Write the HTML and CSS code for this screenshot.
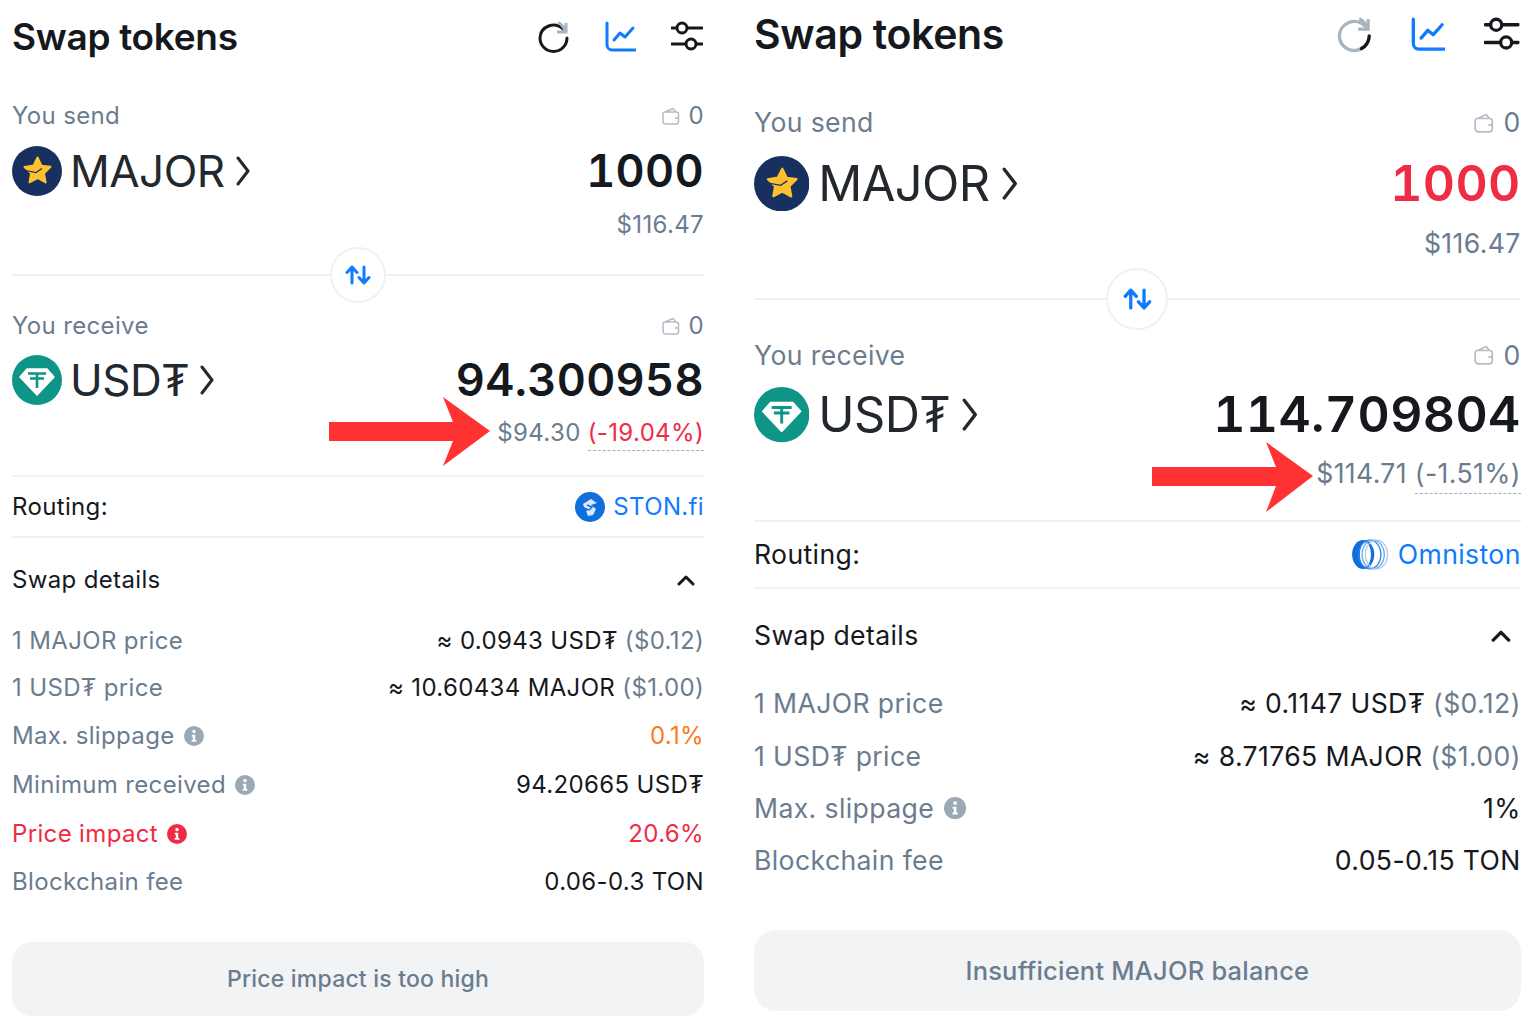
FILE: index.html
```html
<!DOCTYPE html>
<html>
<head>
    <title>Swap tokens</title>
    <meta name="viewport" content="width=device-width, initial-scale=1.0">
    <link rel="stylesheet" href="styles.css">
</head>
<body>
    <svg class="defs" width="0" height="0">
        <symbol id="i-chart" viewBox="0 0 32 32">
            <path d="M3 2v22a5 5 0 0 0 5 5h23" fill="none" stroke="currentColor" stroke-width="3" stroke-linecap="round"/>
            <path d="M10 19l6-7 5 4 8-9" fill="none" stroke="currentColor" stroke-width="3" stroke-linecap="round" stroke-linejoin="round"/>
        </symbol>
        <symbol id="i-sliders" viewBox="0 0 32 32">
            <path d="M1 7h4M17 7h14M1 23h13M26 23h5" fill="none" stroke="currentColor" stroke-width="3" stroke-linecap="round"/>
            <circle cx="11" cy="7" r="5" fill="none" stroke="currentColor" stroke-width="3"/>
            <circle cx="20" cy="23" r="5" fill="none" stroke="currentColor" stroke-width="3"/>
        </symbol>
        <symbol id="i-wallet" viewBox="0 0 18 18">
            <path d="M3 5l8-3.500 3 3.500M3 5h11a2.500 2.500 0 0 1 2.500 2.500v7a2.500 2.500 0 0 1-2.500 2.500H4a3 3 0 0 1-3-3V7a2 2 0 0 1 2-2zM13 11h3.500" fill="none" stroke="currentColor" stroke-width="1.500" stroke-linejoin="round"/>
        </symbol>
        <symbol id="i-chev" viewBox="0 0 14 30">
            <path d="M2 2l10 13L2 28" fill="none" stroke="currentColor" stroke-width="3" stroke-linecap="round" stroke-linejoin="round"/>
        </symbol>
        <symbol id="i-info" viewBox="0 0 20 20">
            <circle cx="10" cy="10" r="10" fill="currentColor"/>
            <circle cx="10" cy="5.500" r="1.700" fill="#fff"/>
            <path d="M7.800 8.800h3.400v5.200h1.200v1.800H7.600V14h1.200v-3.400h-1z" fill="#fff"/>
        </symbol>
        <symbol id="i-up" viewBox="0 0 18 12">
            <path d="M2 10l7-7 7 7" fill="none" stroke="currentColor" stroke-width="3" stroke-linecap="round" stroke-linejoin="round"/>
        </symbol>
        <symbol id="i-swap" viewBox="0 0 26 20">
            <path d="M7 18V2M2 7.500L7 2l5 5.500M19 2v16M14 12.500l5 5.500 5-5.500" fill="none" stroke="currentColor" stroke-width="3" stroke-linecap="round" stroke-linejoin="round"/>
        </symbol>
        <symbol id="t-major" viewBox="0 0 50 50">
            <circle cx="25" cy="25" r="25" fill="#17305f"/>
            <path d="M25.500 11.500l4 8.200 9 1.100-6.500 6.500 1.600 9.200-8.100-4.500-8 4.300 1.500-9-6.500-6.300 9-1.400z" fill="#fdc12f" stroke="#fdc12f" stroke-width="2" stroke-linejoin="round"/>
            <path d="M11 24l13 2.500 6-4" fill="none" stroke="#17305f" stroke-width="1.200"/>
        </symbol>
        <symbol id="t-usdt" viewBox="0 0 50 50">
            <circle cx="25" cy="25" r="25" fill="#0f9488"/>
            <path d="M15 14h20l7 8-17 18L8 22z" fill="#fff" stroke="#fff" stroke-width="1.500" stroke-linejoin="round"/>
            <path d="M16 18.500h18M18 23.500h14M25 18.500V33" fill="none" stroke="#0f9488" stroke-width="2.600"/>
        </symbol>
        <symbol id="t-ston" viewBox="0 0 30 30">
            <circle cx="15" cy="15" r="15" fill="#0f6fdc"/>
            <path d="M8 12l8-5 6 4-6 2 5 4-3 6-5 1-2-5 4-1-6-3z" fill="#dbe9fb"/>
            <path d="M12 13l5 2-3 3" fill="none" stroke="#0f6fdc" stroke-width="1.500"/>
        </symbol>
        <symbol id="t-omni" viewBox="0 0 34 28">
            <ellipse cx="11" cy="14" rx="10" ry="13" fill="#0f6fdc"/>
            <ellipse cx="13" cy="14" rx="5" ry="11" fill="#fff"/>
            <ellipse cx="17" cy="14" rx="10" ry="13" fill="none" stroke="#2d84e8" stroke-width="1.200"/>
            <ellipse cx="20" cy="14" rx="10" ry="13" fill="none" stroke="#6aa8ee" stroke-width="1.200"/>
            <ellipse cx="23" cy="14" rx="10" ry="13" fill="none" stroke="#a8cbf3" stroke-width="1.200"/>
        </symbol>
    </svg>

    <div class="page">
        <section class="panel panel-left">
            <header class="head">
                <h1>Swap tokens</h1>
                <div class="tools">
                    <svg class="tool" viewBox="0 0 32 32">
                        <path d="M26 8A13.500 13.500 0 0 0 3 17a13.500 13.500 0 0 0 27 0" fill="none" stroke="#15191e" stroke-width="3" stroke-linecap="round"/>
                        <path d="M20 11h9V2" fill="none" stroke="#aab4bf" stroke-width="3"/>
                        <path d="M21 1.500a14 14 0 0 1 7 8" fill="none" stroke="#aab4bf" stroke-width="3"/>
                    </svg>
                    <svg class="tool tool-blue"><use href="#i-chart"/></svg>
                    <svg class="tool"><use href="#i-sliders"/></svg>
                </div>
            </header>

            <div class="side side-send">
                <div class="side-top">
                    <span>You send</span>
                    <span class="balance"><svg class="wallet"><use href="#i-wallet"/></svg>0</span>
                </div>
                <div class="token-row">
                    <div class="token">
                        <svg class="token-logo"><use href="#t-major"/></svg>
                        <span class="token-name">MAJOR</span>
                        <svg class="chev"><use href="#i-chev"/></svg>
                    </div>
                    <div class="amount">1000</div>
                </div>
                <div class="usd">$116.47</div>
            </div>

            <div class="divider">
                <button class="swap-btn"><svg class="swap-icon"><use href="#i-swap"/></svg></button>
            </div>

            <div class="side side-receive">
                <div class="side-top">
                    <span>You receive</span>
                    <span class="balance"><svg class="wallet"><use href="#i-wallet"/></svg>0</span>
                </div>
                <div class="token-row">
                    <div class="token">
                        <svg class="token-logo"><use href="#t-usdt"/></svg>
                        <span class="token-name">USD₮</span>
                        <svg class="chev"><use href="#i-chev"/></svg>
                    </div>
                    <div class="amount">94.300958</div>
                </div>
                <div class="usd">$94.30 <span class="pct pct-red">(-19.04%)</span></div>
            </div>

            <div class="routing">
                <span>Routing:</span>
                <span class="route-link"><svg class="route-ston"><use href="#t-ston"/></svg>STON.fi</span>
            </div>

            <div class="details-head">
                <span>Swap details</span>
                <svg class="up"><use href="#i-up"/></svg>
            </div>

            <div class="details">
                <div class="detail">
                    <span class="detail-name">1 MAJOR price</span>
                    <span>≈ 0.0943 USD₮ <span class="muted">($0.12)</span></span>
                </div>
                <div class="detail">
                    <span class="detail-name">1 USD₮ price</span>
                    <span>≈ 10.60434 MAJOR <span class="muted">($1.00)</span></span>
                </div>
                <div class="detail detail-tall">
                    <span class="detail-name">Max. slippage <svg class="info"><use href="#i-info"/></svg></span>
                    <span class="orange">0.1%</span>
                </div>
                <div class="detail detail-tall">
                    <span class="detail-name">Minimum received <svg class="info"><use href="#i-info"/></svg></span>
                    <span>94.20665 USD₮</span>
                </div>
                <div class="detail detail-tall">
                    <span class="detail-name red">Price impact <svg class="info"><use href="#i-info"/></svg></span>
                    <span class="red">20.6%</span>
                </div>
                <div class="detail">
                    <span class="detail-name">Blockchain fee</span>
                    <span>0.06-0.3 TON</span>
                </div>
            </div>

            <button class="submit">Price impact is too high</button>
        </section>

        <section class="panel panel-right">
            <header class="head">
                <h1>Swap tokens</h1>
                <div class="tools">
                    <svg class="tool" viewBox="0 0 32 32">
                        <path d="M26 8A13.500 13.500 0 0 0 3 17a13.500 13.500 0 0 0 20 11.500" fill="none" stroke="#aab4bf" stroke-width="3" stroke-linecap="round"/>
                        <path d="M23 28.500A13.500 13.500 0 0 0 30 17" fill="none" stroke="#15191e" stroke-width="3" stroke-linecap="round"/>
                        <path d="M20 11h9V2" fill="none" stroke="#aab4bf" stroke-width="3"/>
                        <path d="M21 1.500a14 14 0 0 1 7 8" fill="none" stroke="#aab4bf" stroke-width="3"/>
                    </svg>
                    <svg class="tool tool-blue"><use href="#i-chart"/></svg>
                    <svg class="tool"><use href="#i-sliders"/></svg>
                </div>
            </header>

            <div class="side side-send">
                <div class="side-top">
                    <span>You send</span>
                    <span class="balance"><svg class="wallet"><use href="#i-wallet"/></svg>0</span>
                </div>
                <div class="token-row">
                    <div class="token">
                        <svg class="token-logo"><use href="#t-major"/></svg>
                        <span class="token-name">MAJOR</span>
                        <svg class="chev"><use href="#i-chev"/></svg>
                    </div>
                    <div class="amount red">1000</div>
                </div>
                <div class="usd">$116.47</div>
            </div>

            <div class="divider">
                <button class="swap-btn"><svg class="swap-icon"><use href="#i-swap"/></svg></button>
            </div>

            <div class="side side-receive">
                <div class="side-top">
                    <span>You receive</span>
                    <span class="balance"><svg class="wallet"><use href="#i-wallet"/></svg>0</span>
                </div>
                <div class="token-row">
                    <div class="token">
                        <svg class="token-logo"><use href="#t-usdt"/></svg>
                        <span class="token-name">USD₮</span>
                        <svg class="chev"><use href="#i-chev"/></svg>
                    </div>
                    <div class="amount">114.709804</div>
                </div>
                <div class="usd">$114.71 <span class="pct">(-1.51%)</span></div>
            </div>

            <div class="routing">
                <span>Routing:</span>
                <span class="route-link"><svg class="route-omni"><use href="#t-omni"/></svg>Omniston</span>
            </div>

            <div class="details-head">
                <span>Swap details</span>
                <svg class="up"><use href="#i-up"/></svg>
            </div>

            <div class="details">
                <div class="detail">
                    <span class="detail-name">1 MAJOR price</span>
                    <span>≈ 0.1147 USD₮ <span class="muted">($0.12)</span></span>
                </div>
                <div class="detail">
                    <span class="detail-name">1 USD₮ price</span>
                    <span>≈ 8.71765 MAJOR <span class="muted">($1.00)</span></span>
                </div>
                <div class="detail">
                    <span class="detail-name">Max. slippage <svg class="info"><use href="#i-info"/></svg></span>
                    <span>1%</span>
                </div>
                <div class="detail">
                    <span class="detail-name">Blockchain fee</span>
                    <span>0.05-0.15 TON</span>
                </div>
            </div>

            <button class="submit">Insufficient MAJOR balance</button>
        </section>

        <svg class="arrow arrow-left" viewBox="0 0 161 69"><polygon points="0,25 124,25 114,0 161,34 114,69 124,44 0,44"/></svg>
        <svg class="arrow arrow-right" viewBox="0 0 161 70"><polygon points="0,25 124,25 114,0 161,34 114,70 124,44 0,44"/></svg>
    </div>
</body>
</html>
```

FILE: styles.css
```css
body {
    margin: 0;
    background-color: #fff;
    color: #15191e;
    font-family: Inter, "Noto Sans", sans-serif;
}

.defs {
    display: block;
    height: 0;
}

.page {
    position: relative;
    display: flex;
    align-items: flex-start;
    gap: 50px;
    padding-left: 12px;
}

.panel {
    width: 692px;
    font-size: 24px;
    line-height: 30px;
    letter-spacing: 0.35px;
}

/* right screenshot is the same widget, just bigger */
.panel-right {
    zoom: 1.108;
    margin-top: -5.4px;
}

.head {
    display: flex;
    justify-content: space-between;
    align-items: center;
    height: 74px;
}

h1 {
    margin: 0;
    font-size: 37px;
    font-weight: 600;
    letter-spacing: -0.3px;
}

.tools {
    display: flex;
    gap: 35px;
    margin-right: 1px;
}

.tool {
    width: 32px;
    height: 32px;
    color: #15191e;
}

.tool-blue {
    color: #0f7bff;
}

.side {
    color: #6b7c8f;
}

.side-send {
    margin-top: 27px;
}

.side-top {
    display: flex;
    justify-content: space-between;
}

.balance {
    display: flex;
    align-items: center;
    gap: 9px;
}

.wallet {
    width: 18px;
    height: 18px;
    color: #b4bdc6;
}

.token-row {
    display: flex;
    justify-content: space-between;
    align-items: center;
    height: 50px;
    margin-top: 15px;
}

.side-receive .token-row {
    margin-top: 14px;
}

.token {
    display: flex;
    align-items: center;
    color: #23282e;
}

.token-logo {
    width: 50px;
    height: 50px;
    margin-right: 8px;
}

.token-name {
    font-size: 44px;
    line-height: 50px;
    letter-spacing: -0.5px;
}

.chev {
    width: 14px;
    height: 30px;
    margin-left: 11px;
}

.amount {
    font-size: 45px;
    line-height: 50px;
    font-weight: 600;
    font-variant-numeric: tabular-nums;
    color: #15191e;
}

.amount.red {
    color: #ef2b45;
}

.usd {
    margin-top: 13px;
    text-align: right;
}

.side-send .usd {
    margin-top: 14px;
}

.pct {
    display: inline-block;
    padding-bottom: 2px;
    border-bottom: 1px dashed #a6aeb7;
    line-height: 30px;
}

.pct-red {
    color: #ef2b45;
}

.divider {
    position: relative;
    display: flex;
    justify-content: center;
    align-items: center;
    height: 56px;
    margin: 7px 0 8px;
}

.divider::before {
    content: "";
    position: absolute;
    left: 0;
    right: 0;
    top: 27px;
    border-top: 2px solid #eff1f3;
}

.swap-btn {
    position: relative;
    display: flex;
    justify-content: center;
    align-items: center;
    width: 56px;
    height: 56px;
    padding: 0;
    background-color: #fff;
    border: 2px solid #eff1f3;
    border-radius: 50%;
}

.swap-icon {
    width: 26px;
    height: 20px;
    color: #0f7bff;
}

.routing {
    display: flex;
    justify-content: space-between;
    align-items: center;
    height: 59px;
    margin-top: 24px;
    border-top: 2px solid #eff1f3;
    border-bottom: 2px solid #eff1f3;
}

.route-link {
    display: flex;
    align-items: center;
    color: #0f7bff;
}

.route-ston {
    width: 30px;
    height: 30px;
    margin-right: 8px;
}

.route-omni {
    width: 34px;
    height: 28px;
    margin-right: 8px;
}

.details-head {
    display: flex;
    justify-content: space-between;
    align-items: center;
    margin-top: 27px;
}

.up {
    width: 18px;
    height: 12px;
    margin-right: 9px;
}

.details {
    margin-top: 22px;
}

.panel-right .details {
    margin-top: 23px;
}

.detail {
    display: flex;
    justify-content: space-between;
    align-items: center;
    height: 47px;
}

.detail-tall {
    height: 49px;
}

.detail-name {
    display: flex;
    align-items: center;
    gap: 9px;
    color: #6b7c8f;
}

.info {
    width: 20px;
    height: 20px;
    color: #9ba8b5;
}

.muted {
    color: #6b7c8f;
}

.orange {
    color: #f97a1f;
}

.red,
.detail-name.red,
.red .info {
    color: #ef2b45;
}

.submit {
    display: block;
    width: 100%;
    height: 74px;
    margin-top: 37px;
    background-color: #f1f3f5;
    border: none;
    border-radius: 20px;
    color: #6b7c8f;
    font-family: inherit;
    font-size: 23px;
    font-weight: 500;
    letter-spacing: 0.2px;
}

.panel-right .submit {
    margin-top: 39px;
}

.arrow {
    position: absolute;
    width: 161px;
    fill: #ff3333;
}

.arrow-left {
    left: 329px;
    top: 397px;
    height: 69px;
}

.arrow-right {
    left: 1152px;
    top: 442px;
    height: 70px;
}
```
